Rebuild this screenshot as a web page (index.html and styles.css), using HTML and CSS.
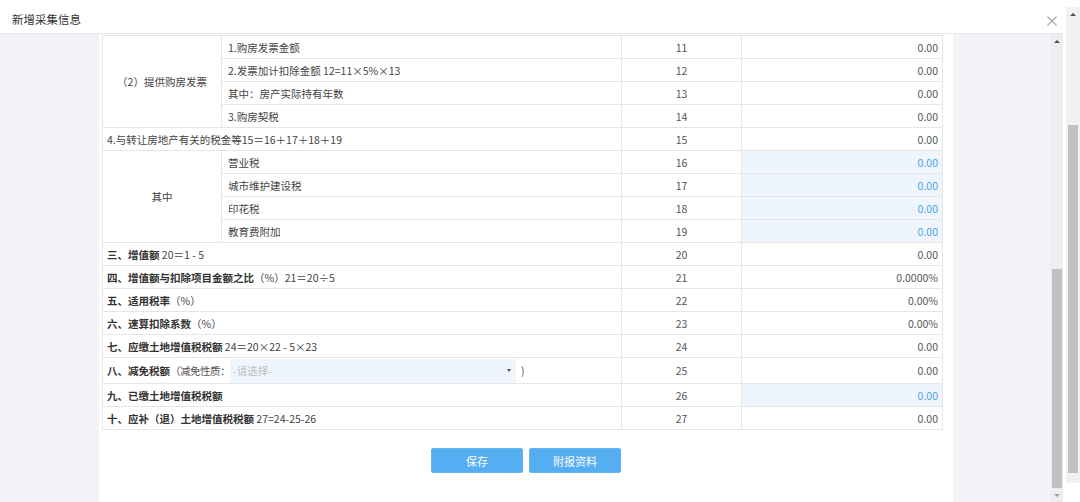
FILE: index.html
```html
<!DOCTYPE html>
<html lang="zh-CN">
<head>
<meta charset="utf-8">
<title>新增采集信息</title>
<link rel="stylesheet" href="styles.css">
</head>
<body>
<div class="page">
  <div class="dialog">
    <div class="dlg-head">
      <span class="dlg-title">新增采集信息</span>
      <span class="dlg-close"><svg width="10" height="10" viewBox="0 0 10 10"><path d="M0.5 0.5L9.5 9.5M9.5 0.5L0.5 9.5" stroke="#a8a8a8" stroke-width="1.1" fill="none"/></svg></span>
    </div>
    <div class="dlg-body">
      <div class="side-l"></div>
      <div class="panel">
        <table class="grid">
          <colgroup><col class="c1"><col class="c2"><col class="c3"><col class="c4"></colgroup>
          <tbody>
            <tr><td rowspan="4" class="center">（2）提供购房发票</td><td class="lbl">1.购房发票金额</td><td class="num">11</td><td class="val">0.00</td></tr>
            <tr><td class="lbl">2.发票加计扣除金额 12=11×5%×13</td><td class="num">12</td><td class="val">0.00</td></tr>
            <tr><td class="lbl">其中：房产实际持有年数</td><td class="num">13</td><td class="val">0.00</td></tr>
            <tr><td class="lbl">3.购房契税</td><td class="num">14</td><td class="val">0.00</td></tr>
            <tr><td colspan="2" class="lbl wide">4.与转让房地产有关的税金等15＝16＋17＋18＋19</td><td class="num">15</td><td class="val">0.00</td></tr>
            <tr><td rowspan="4" class="center">其中</td><td class="lbl">营业税</td><td class="num">16</td><td class="val edit">0.00</td></tr>
            <tr><td class="lbl">城市维护建设税</td><td class="num">17</td><td class="val edit">0.00</td></tr>
            <tr><td class="lbl">印花税</td><td class="num">18</td><td class="val edit">0.00</td></tr>
            <tr><td class="lbl">教育费附加</td><td class="num">19</td><td class="val edit">0.00</td></tr>
            <tr><td colspan="2" class="lbl wide"><b>三、增值额</b> 20＝1 - 5</td><td class="num">20</td><td class="val">0.00</td></tr>
            <tr><td colspan="2" class="lbl wide"><b>四、增值额与扣除项目金额之比</b>（%）21＝20÷5</td><td class="num">21</td><td class="val">0.0000%</td></tr>
            <tr><td colspan="2" class="lbl wide"><b>五、适用税率</b>（%）</td><td class="num">22</td><td class="val">0.00%</td></tr>
            <tr><td colspan="2" class="lbl wide"><b>六、速算扣除系数</b>（%）</td><td class="num">23</td><td class="val">0.00%</td></tr>
            <tr><td colspan="2" class="lbl wide"><b>七、应缴土地增值税税额</b> 24＝20×22 - 5×23</td><td class="num">24</td><td class="val">0.00</td></tr>
            <tr class="tall"><td colspan="2" class="lbl wide"><div class="sel-line"><b>八、减免税额</b><span class="note">（减免性质：</span><span class="select"><span class="ph">-请选择-</span><span class="caret"></span></span><span class="close-paren">)</span></div></td><td class="num">25</td><td class="val">0.00</td></tr>
            <tr><td colspan="2" class="lbl wide"><b>九、已缴土地增值税税额</b></td><td class="num">26</td><td class="val edit">0.00</td></tr>
            <tr><td colspan="2" class="lbl wide"><b>十、应补（退）土地增值税税额</b> 27=24-25-26</td><td class="num">27</td><td class="val">0.00</td></tr>
          </tbody>
        </table>
        <div class="actions">
          <button class="btn">保存</button>
          <button class="btn">附报资料</button>
        </div>
      </div>
      <div class="side-r"></div>
      <div class="sb inner">
        <div class="sb-btn"><span class="tri-up"></span></div>
        <div class="sb-space"></div>
        <div class="sb-thumb"></div>
        <div class="sb-btn"><span class="tri-down"></span></div>
      </div>
    </div>
  </div>
  <div class="sb outer">
    <div class="sb-btn"><span class="tri-up"></span></div>
    <div class="sb-space"></div>
    <div class="sb-thumb"></div>
    <div class="sb-end"></div>
  </div>
</div>
</body>
</html>
```
FILE: styles.css
```css
* { box-sizing: border-box; }
html, body { margin: 0; padding: 0; }
body {
  width: 1080px;
  height: 502px;
  overflow: hidden;
  background: #fff;
  font-family: "Noto Sans CJK SC", "Noto Sans", sans-serif;
  color: #333;
}
.page { display: flex; height: 502px; }
.dialog { width: 1063px; display: flex; flex-direction: column; }
.dlg-head {
  height: 34px;
  flex: none;
  display: flex;
  align-items: center;
  justify-content: space-between;
  padding: 4px 6px 0 12px;
  border-bottom: 1px solid #e8e9ed;
}
.dlg-title { font-size: 11.5px; color: #333; }
.dlg-close { display: flex; margin-top: 4px; }
.dlg-body { flex: 1; display: flex; background: #f2f3f7; min-height: 0; }
.side-l { width: 99px; flex: none; }
.side-r { flex: 1; }
.panel { width: 854px; flex: none; background: #fff; padding-top: 1px; }
.grid {
  margin-left: 3px;
  width: 840px;
  border-collapse: collapse;
  table-layout: fixed;
  font-size: 10.5px;
}
.c1 { width: 119px; }
.c2 { width: 400px; }
.c3 { width: 120px; }
.c4 { width: 201px; }
.grid td {
  border: 1px solid #e6e6e6;
  height: 23px;
  padding: 0 4px;
  line-height: 21px;
  white-space: nowrap;
  color: #444;
}
.grid tr.tall td { height: 26px; }
.grid td.lbl { padding-left: 6px; }
.grid td.wide { padding-left: 4px; }
.grid td b { font-weight: 700; color: #333; }
.grid td.center { text-align: center; }
.grid td.num { text-align: center; color: #555; }
.grid td.val { text-align: right; color: #555; }
.grid td.val.edit { background: #eef5fd; color: #4ca3e4; }
.sel-line { display: flex; align-items: center; }
.note { color: #555; letter-spacing: -0.5px; }
.select {
  width: 286px;
  height: 24px;
  margin-left: 0;
  background: #eef5fd;
  display: flex;
  align-items: center;
  justify-content: space-between;
  padding: 0 5px 0 3px;
}
.ph { color: #bdbdbd; }
.caret {
  width: 0; height: 0;
  border-left: 2.5px solid transparent;
  border-right: 2.5px solid transparent;
  border-top: 3px solid #555;
}
.close-paren { margin-left: 5px; color: #555; }
.actions {
  display: flex;
  justify-content: center;
  gap: 6px;
  margin-top: 18px;
}
.btn {
  width: 92px;
  height: 25px;
  background: #55adf2;
  border: 1px solid #66b6f4;
  border-radius: 2px;
  color: #fff;
  font-family: "Noto Sans CJK SC", "Noto Sans", sans-serif;
  font-size: 11px;
  padding: 0;
}
.sb { display: flex; flex-direction: column; flex: none; }
.sb.inner { width: 13px; background: #eceef1; }
.sb.outer { width: 14px; margin-left: 3px; margin-top: 7px; height: 476px; background: #f1f1f1; }
.sb-btn { height: 14px; display: flex; align-items: center; justify-content: center; flex: none; }
.sb-space { flex: 1; }
.sb-end { height: 10px; flex: none; }
.sb.inner .sb-thumb { height: 219px; width: 10px; margin-left: 2px; background: #c1c1c1; flex: none; }
.sb.outer .sb-thumb { height: 348px; width: 10px; margin-left: 2px; background: #c1c1c1; flex: none; }
.tri-up {
  width: 0; height: 0;
  border-left: 3px solid transparent;
  border-right: 3px solid transparent;
  border-bottom: 3px solid #505050;
}
.tri-down {
  width: 0; height: 0;
  border-left: 3px solid transparent;
  border-right: 3px solid transparent;
  border-top: 3px solid #a0a0a0;
}
```
